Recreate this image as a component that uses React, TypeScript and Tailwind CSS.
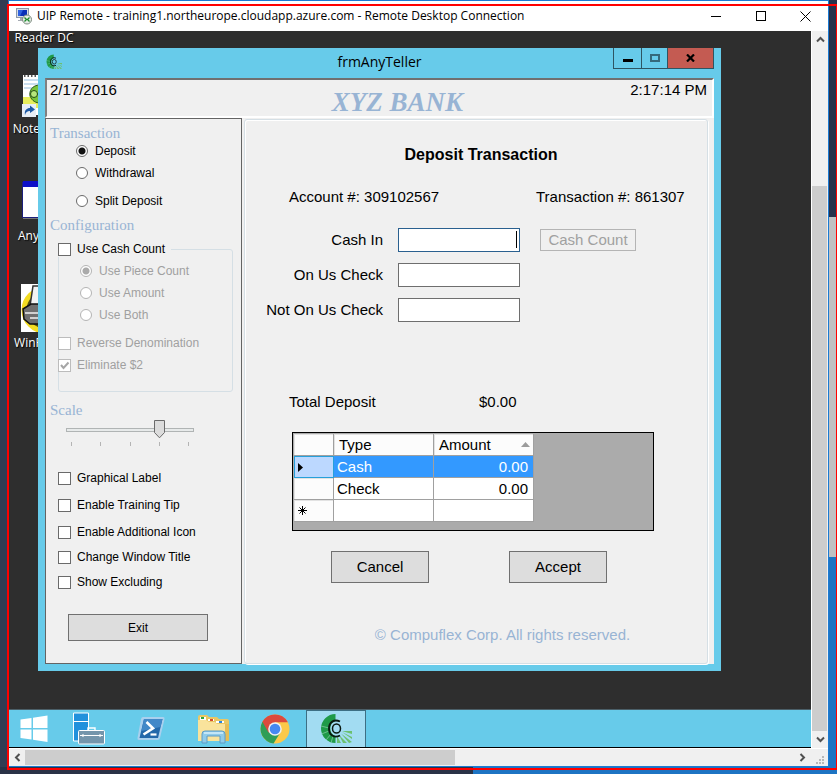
import { useState } from "react";
import type { ReactNode } from "react";

const uiFont = "font-['Open_Sans',sans-serif]";

function BrandMark({ size }: { size: number }) {
  return (
    <svg width={size} height={size} viewBox="0 0 32 32" aria-hidden="true">
      <path d="M15.500 1 A14.500 14.500 0 0 0 15.500 30 L15.500 23 A8 8 0 0 1 15.500 8 Z" fill="#1f9a48" />
      <path d="M1 13 L9 15 M1.500 21 L9 18 M6 27 L11 21 M11 30 L13 23" stroke="#7fc9a0" strokeWidth="0.8" />
      <path d="M17 23 L21 30 L17 30 Z M19 22 L27 30 L23 30 Z M21 20.500 L32 29 L29 30 Z M22 19 L32 24 L32 26 Z M22 18 L32 18 L32 21 Z" fill="#6cc06f" />
      <path d="M20 8.500 C14 5.500 9 9.500 9 15.500 C9 22 14 25.500 20 22.500" fill="none" stroke="#0a1a12" strokeWidth="1.900" />
      <ellipse cx="16.500" cy="15.500" rx="4" ry="4.600" fill="none" stroke="#0a1a12" strokeWidth="1.500" />
    </svg>
  );
}

function RemoteIcon() {
  return (
    <svg width="17" height="17" viewBox="0 0 17 17" aria-hidden="true">
      <rect x="0.500" y="0.500" width="12" height="9" fill="#d7dde6" stroke="#8d98a8" />
      <rect x="2" y="2" width="9" height="6" fill="#0a2fb8" />
      <path d="M2 2 H7 L4 8 H2 Z" fill="#2f62e0" />
      <path d="M4 10 H9 V12 H11 V13 H2 V12 H4 Z" fill="#a5aab2" />
      <circle cx="11" cy="11.500" r="4.500" fill="#e6ece6" stroke="#7d8b80" />
      <path d="M8.500 9.500 L10.500 11.500 L8.500 13.500 M13.500 9.500 L11.500 11.500 L13.500 13.500" fill="none" stroke="#1c8a2c" strokeWidth="1.300" />
    </svg>
  );
}

function NotepadIcon() {
  return (
    <svg width="48" height="48" viewBox="0 0 48 48" aria-hidden="true">
      <rect x="3" y="5" width="42" height="40" fill="#fff" />
      <path d="M4 6 H44" stroke="#555" strokeWidth="2" strokeDasharray="1.500 2" />
      <path d="M4 10 H44 M4 14 H44 M4 18 H44" stroke="#b9d4ea" strokeWidth="1.500" />
      <path d="M3 27 H45 V38 H3 Z" fill="#e7ee5c" />
      <path d="M20 15 C12 15 9 21 10 26 C12 31 16 33 20 33 Z" fill="#78c43a" stroke="#2d5a18" />
      <circle cx="14" cy="24" r="3.500" fill="#b6e67c" stroke="#234c13" />
      <circle cx="22" cy="24" r="4" fill="#b6e67c" stroke="#234c13" />
      <rect x="2" y="34" width="14" height="13" fill="#e7eef6" />
      <path d="M5 45 C4 40 7 38 10 38 V35.500 L15 39.500 L10 43 V41 C7 41 6 42 5 45 Z" fill="#1d5aa6" />
    </svg>
  );
}

function TellerIcon() {
  return (
    <svg width="48" height="48" viewBox="0 0 48 48" aria-hidden="true">
      <rect x="2.500" y="5.500" width="43" height="35" fill="#fff" stroke="#1c1f7c" />
      <rect x="3" y="4" width="42" height="6" fill="#0d10c8" />
      <path d="M3 41.500 H45" stroke="#777" />
    </svg>
  );
}

function PrinterIcon() {
  return (
    <svg width="48" height="48" viewBox="0 0 48 48" aria-hidden="true">
      <rect x="1" y="0" width="46" height="48" fill="#fff" />
      <circle cx="25" cy="26" r="21" fill="#55540f" stroke="#f3dc22" strokeWidth="5" />
      <path d="M13 2 H34 V22 H10 Z" fill="#f3f3f3" stroke="#333" strokeWidth="1.500" />
      <path d="M3 25 L11 20 H36 V40 H10 L4 35 Z" fill="#6f6f6f" stroke="#111" strokeWidth="1.500" />
      <path d="M5 29 H36 M10 34 H36" stroke="#d0d0d0" strokeWidth="2" />
    </svg>
  );
}

function StartLogo() {
  return (
    <svg width="28" height="28" viewBox="0 0 28 28" aria-hidden="true">
      <path d="M0.500 4.500 L11.500 3 V13 H0.500 Z M13 2.800 L27.500 0.500 V13 H13 Z M0.500 14.500 H11.500 V24.500 L0.500 23 Z M13 14.500 H27.500 V27 L13 24.800 Z" fill="#fff" />
    </svg>
  );
}

function ServerManagerIcon() {
  return (
    <svg width="32" height="33" viewBox="0 0 32 33" aria-hidden="true">
      <path d="M0.500 1 H15.500 V29 H0.500 Z" fill="#2191dc" stroke="#fff" />
      <path d="M0 9.500 H16" stroke="#fff" />
      <path d="M15 18 V16 H22 V18" fill="none" stroke="#fff" strokeWidth="1.400" />
      <rect x="5.500" y="18.500" width="26" height="13.500" rx="1" fill="#7495ab" stroke="#fff" />
      <path d="M7 23.500 H30" stroke="#fff" />
      <path d="M8 23.500 L10.500 21.800 V25.200 Z M29 23.500 L26.500 21.800 V25.200 Z" fill="#fff" />
    </svg>
  );
}

function PowerShellIcon() {
  return (
    <svg width="28" height="25" viewBox="0 0 28 25" aria-hidden="true">
      <path d="M6 1 H26 Q28 1 27.500 3 L23 22 Q22.500 24 20.500 24 H2 Q0 24 0.500 22 L4 3 Q4.400 1 6 1 Z" fill="#a9d0ee" />
      <path d="M7 3 H25.500 L21 22 H2.500 Z" fill="#2468aa" />
      <path d="M7 3 H25.500 L23.500 11 L4.500 15 Z" fill="#4288c8" />
      <path d="M9.500 6 L16 12.300 L6.500 18.500" fill="none" stroke="#fff" strokeWidth="2.600" />
      <path d="M13.500 18.500 H19.500" stroke="#fff" strokeWidth="2.200" />
    </svg>
  );
}

function ExplorerIcon() {
  return (
    <svg width="33" height="30" viewBox="0 0 33 30" aria-hidden="true">
      <path d="M1 3 Q1 1 3 1 H10 L12 3 H20 L22 5 H30 Q32 5 32 7 V27 H1 Z" fill="#e9c765" />
      <path d="M3 3 H9 V6 H3 Z" fill="#fff" />
      <path d="M4 3 H7 V5 H4 Z" fill="#2ba53a" />
      <path d="M11 5 H17 V7 H11 Z" fill="#fff" />
      <path d="M13 5 H16 V7 H13 Z" fill="#d74a2c" />
      <path d="M19 7 H27 V9 H19 Z" fill="#fff" />
      <path d="M22 7 H25 V9 H22 Z" fill="#2784dd" />
      <path d="M1 6 H9 L12 8 H18 L20 10 H32 V27 H1 Z" fill="#f9e39c" />
      <path d="M28 10 H32 V27 H28 Z" fill="#e5bd57" />
      <path d="M5 29 V20 Q5 17 8 17 H25 Q28 17 28 20 V29 H23 V22 H10 V29 Z" fill="#8fcbea" stroke="#5d9cc6" />
      <path d="M7 19 H26" stroke="#d4effb" strokeWidth="1.500" />
    </svg>
  );
}

function ChromeIcon() {
  return (
    <svg width="30" height="30" viewBox="0 0 30 30" aria-hidden="true">
      <circle cx="15" cy="15" r="14.500" fill="#fbc94a" />
      <path d="M15 15 L2.440 7.750 A14.500 14.500 0 0 0 13.500 29.400 L21 17.500 Z" fill="#2f9e58" />
      <path d="M15 15 L8.500 18.500 L2.440 7.750 A14.500 14.500 0 0 1 27.560 7.750 L27.800 8.300 H15 Z" fill="#dc4a3d" />
      <circle cx="15" cy="15" r="6.800" fill="#f1f1f1" />
      <circle cx="15" cy="15" r="5.300" fill="#4688f1" />
    </svg>
  );
}

function Chevron({ turn }: { turn: string }) {
  return (
    <svg width="9" height="9" viewBox="0 0 9 9" className={turn} aria-hidden="true">
      <path d="M1 6.500 L4.500 3 L8 6.500" fill="none" stroke="#505050" strokeWidth="2" />
    </svg>
  );
}

type OptionProps = { id: string; label: string; disabled?: boolean; checked?: boolean };

function RadioOption({ id, name, label, disabled, checked }: OptionProps & { name: string }) {
  return (
    <div className="flex h-4 items-center gap-[7px]">
      <input
        id={id}
        name={name}
        type="radio"
        defaultChecked={checked}
        disabled={disabled}
        className="size-3 shrink-0 appearance-none rounded-full border border-[#6a6a6a] bg-white checked:bg-[radial-gradient(circle,#111_3px,#fff_4px)] disabled:border-[#b4b4b4] disabled:checked:bg-[radial-gradient(circle,#aaa_3px,#fff_4px)]"
      />
      <label htmlFor={id} className={disabled ? "text-[#a0a0a0]" : ""}>{label}</label>
    </div>
  );
}

function CheckOption({ id, label, disabled, checked }: OptionProps) {
  return (
    <div className="flex h-4 items-center gap-1.5">
      <span className="relative size-[13px] shrink-0">
        <input
          id={id}
          type="checkbox"
          defaultChecked={checked}
          disabled={disabled}
          className="peer block size-[13px] appearance-none border border-[#6a6a6a] bg-white disabled:border-[#bcbcbc]"
        />
        <svg viewBox="0 0 13 13" className="pointer-events-none absolute inset-0 hidden text-[#222] peer-checked:block peer-disabled:text-[#a6a6a6]" aria-hidden="true">
          <path d="M3 6 L5.500 9 L10.500 3.500" fill="none" stroke="currentColor" strokeWidth="2" />
        </svg>
      </span>
      <label htmlFor={id} className={disabled ? "whitespace-nowrap text-[#a0a0a0]" : "whitespace-nowrap"}>{label}</label>
    </div>
  );
}

function SectionTitle({ children }: { children: ReactNode }) {
  return <h2 className="pl-1 font-['Liberation_Serif',serif] text-[15px] leading-5 text-[#98b4d4]">{children}</h2>;
}

function ScaleSlider() {
  const [value, setValue] = useState(3);
  return (
    <div className="relative ml-5 w-32">
      <input
        type="range"
        aria-label="Scale"
        min={0}
        max={4}
        value={value}
        onChange={(e) => setValue(Number(e.target.value))}
        className="block h-5 w-full appearance-none bg-transparent [&::-webkit-slider-runnable-track]:h-1 [&::-webkit-slider-runnable-track]:border [&::-webkit-slider-runnable-track]:border-[#b0b4b4] [&::-webkit-slider-runnable-track]:bg-[#e7eaea] [&::-webkit-slider-thumb]:size-0 [&::-webkit-slider-thumb]:appearance-none"
      />
      <svg
        width="11"
        height="19"
        viewBox="0 0 11 19"
        className="pointer-events-none absolute top-0"
        style={{ left: `calc((100% - 11px) * ${value / 4})` }}
        aria-hidden="true"
      >
        <path d="M0.500 0.500 H10.500 V12.500 L5.500 17.800 L0.500 12.500 Z" fill="#dcdcdc" stroke="#6a6a6a" />
      </svg>
      <div className="flex justify-between px-[5px] pt-0.5">
        {[0, 1, 2, 3, 4].map((tick) => (
          <span key={tick} className="h-1 w-px bg-[#b4b4b4]" />
        ))}
      </div>
    </div>
  );
}

function OptionsPanel() {
  return (
    <aside className="flex w-[197px] shrink-0 flex-col border border-[#646464] pt-1 text-xs leading-4">
      <SectionTitle>Transaction</SectionTitle>
      <div className="flex flex-col pl-[30px]">
        <RadioOption id="deposit" name="kind" label="Deposit" checked />
        <div className="pt-1.5">
          <RadioOption id="withdrawal" name="kind" label="Withdrawal" />
        </div>
        <div className="pt-3 pb-1.5">
          <RadioOption id="split" name="kind" label="Split Deposit" />
        </div>
      </div>
      <SectionTitle>Configuration</SectionTitle>
      <fieldset className="mt-1.5 mr-2 ml-3 rounded-[3px] border border-[#d5dfe5] pb-[18px]">
        <legend className="-ml-px pr-1.5">
          <CheckOption id="cash-count" label="Use Cash Count" />
        </legend>
        <div className="flex flex-col gap-1.5 pt-1.5 pl-[21px]">
          <RadioOption id="piece" name="method" label="Use Piece Count" disabled checked />
          <RadioOption id="amount" name="method" label="Use Amount" disabled />
          <RadioOption id="both" name="method" label="Use Both" disabled />
        </div>
        <div className="-ml-px flex flex-col gap-1.5 pt-3">
          <CheckOption id="reverse" label="Reverse Denomination" disabled />
          <CheckOption id="eliminate" label="Eliminate $2" disabled checked />
        </div>
      </fieldset>
      <div className="pt-2">
        <SectionTitle>Scale</SectionTitle>
      </div>
      <ScaleSlider />
      <div className="flex flex-col gap-[9px] pt-6 pl-3">
        <CheckOption id="graphical" label="Graphical Label" />
        <div className="py-0.5">
          <CheckOption id="tip" label="Enable Training Tip" />
        </div>
        <CheckOption id="icon" label="Enable Additional Icon" />
        <CheckOption id="title" label="Change Window Title" />
        <CheckOption id="excluding" label="Show Excluding" />
      </div>
      <button type="button" className="mt-6 ml-[22px] h-[27px] w-[140px] border border-[#707070] bg-[#dddddd]">Exit</button>
    </aside>
  );
}

function AmountRow({ id, label, focused, children }: { id: string; label: string; focused?: boolean; children?: ReactNode }) {
  return (
    <div className="flex items-center">
      <label htmlFor={id} className="w-[138px] text-right whitespace-nowrap">{label}</label>
      <span className="relative mr-5 ml-[15px]">
        <input
          id={id}
          type="text"
          className={
            focused
              ? "block h-6 w-[122px] border border-[#2a608f] bg-white px-1 text-right caret-transparent outline-none"
              : "block h-6 w-[122px] border border-[#6e6e6e] bg-white px-1 text-right outline-none"
          }
        />
        {focused && <span className="absolute top-[3px] right-[3px] h-[17px] w-px bg-black" />}
      </span>
      {children}
    </div>
  );
}

function DepositGrid() {
  const headCell = "border-r border-b border-[#a0a0a0] bg-[#fcfcfc] shadow-[inset_1px_1px_0_#e2e2e2]";
  return (
    <div className="ml-[47px] h-[99px] w-[362px] border border-black bg-[#ababab] p-px">
      <table className="w-[240px] table-fixed border-separate border-spacing-0 text-[15px] leading-5">
        <colgroup>
          <col className="w-10" />
          <col className="w-[100px]" />
          <col className="w-[100px]" />
        </colgroup>
        <thead>
          <tr className="h-[22px]">
            <th className={headCell} aria-label="Row" />
            <th className={`${headCell} pl-[5px] text-left font-normal`}>Type</th>
            <th className={`${headCell} pl-[5px] text-left font-normal`}>
              <span className="flex items-center justify-between pr-[3px]">
                Amount
                <svg width="9" height="5" viewBox="0 0 9 5" aria-hidden="true">
                  <path d="M0 5 L4.500 0 L9 5 Z" fill="#9c9c9c" />
                </svg>
              </span>
            </th>
          </tr>
        </thead>
        <tbody>
          <tr className="h-[22px] text-white">
            <th className="border border-[#26a0da] bg-[#bcd8ff] pl-[3px]" aria-label="Current row">
              <svg width="5" height="9" viewBox="0 0 5 9" aria-hidden="true">
                <path d="M0 0 L5 4.500 L0 9 Z" fill="#000" />
              </svg>
            </th>
            <td className="border-r border-b border-[#a0a0a0] bg-[#3399ff] pl-[3px]">Cash</td>
            <td className="border-r border-b border-[#a0a0a0] bg-[#3399ff] pr-[5px] text-right">0.00</td>
          </tr>
          <tr className="h-[22px]">
            <th className={headCell} aria-label="Row" />
            <td className="border-r border-b border-[#a0a0a0] bg-white pl-[3px]">Check</td>
            <td className="border-r border-b border-[#a0a0a0] bg-white pr-[5px] text-right">0.00</td>
          </tr>
          <tr className="h-[22px]">
            <th className={`${headCell} pl-1`} aria-label="New row">
              <svg width="9" height="9" viewBox="0 0 9 9" aria-hidden="true">
                <path d="M4.500 0 V9 M0 4.500 H9 M1.500 1.500 L7.500 7.500 M7.500 1.500 L1.500 7.500" stroke="#000" />
              </svg>
            </th>
            <td className="border-r border-b border-[#a0a0a0] bg-white" />
            <td className="border-r border-b border-[#a0a0a0] bg-white" />
          </tr>
        </tbody>
      </table>
    </div>
  );
}

function DepositPanel() {
  return (
    <section className="mt-px mr-1.5 ml-0.5 flex flex-1 flex-col rounded-[3px] border border-[#d5dfe5] shadow-[inset_1px_1px_0_#fff,1px_1px_0_#fff]">
      <h1 className="pt-[25px] pl-2.5 text-center text-base leading-5 font-bold">Deposit Transaction</h1>
      <div className="flex pt-[22px] pl-11">
        <p className="w-[247px]">Account #: 309102567</p>
        <p>Transaction #: 861307</p>
      </div>
      <form className="flex flex-col gap-[11px] pt-[21px]" onSubmit={(e) => e.preventDefault()}>
        <AmountRow id="cash-in" label="Cash In" focused>
          <button type="button" disabled className="h-[22px] w-24 border border-[#b4b4b4] bg-[#f0f0f0] text-[#a0a0a0]">Cash Count</button>
        </AmountRow>
        <AmountRow id="on-us" label="On Us Check" />
        <AmountRow id="not-on-us" label="Not On Us Check" />
      </form>
      <div className="flex pt-[70px] pb-5 pl-11">
        <p className="w-[190px]">Total Deposit</p>
        <p>$0.00</p>
      </div>
      <DepositGrid />
      <div className="flex gap-20 pt-5 pl-[86px]">
        <button type="button" className="h-8 w-[98px] border border-[#707070] bg-[#dddddd]">Cancel</button>
        <button type="button" className="h-8 w-[98px] border border-[#707070] bg-[#dddddd]">Accept</button>
      </div>
      <p className="pt-[42px] pl-[53px] text-center text-[#98b4d4]">© Compuflex Corp. All rights reserved.</p>
    </section>
  );
}

function TellerWindow() {
  return (
    <div className="absolute top-[17px] left-[29px] flex w-[683px] flex-col bg-[#67cbea] px-[7px] pb-[7px] font-['Liberation_Sans',Arial,sans-serif] text-[15px] leading-5 text-black">
      <header className="grid h-[30px] grid-cols-[101px_1fr_101px] items-start">
        <span className="pt-1.5 pl-px">
          <BrandMark size={16} />
        </span>
        <span className="pt-1 text-center font-['Open_Sans',sans-serif] text-sm leading-5">frmAnyTeller</span>
        <span className="flex h-[21px] divide-x divide-[#2e5563] border border-t-0 border-[#2e5563]">
          <button type="button" aria-label="Minimize" className="flex w-7 items-center justify-center">
            <span className="mt-1 h-[3px] w-2.5 bg-black" />
          </button>
          <button type="button" aria-label="Maximize" className="flex w-[26px] items-center justify-center">
            <span className="h-2 w-2.5 border-2 border-[#35697b]" />
          </button>
          <button type="button" aria-label="Close" className="flex flex-1 items-center justify-center bg-[#c45b52]">
            <svg width="9" height="8" viewBox="0 0 9 8" aria-hidden="true">
              <path d="M1 0.500 L8 7.500 M8 0.500 L1 7.500" stroke="#000" strokeWidth="2.200" />
            </svg>
          </button>
        </span>
      </header>
      <div className="flex h-10 justify-between border-2 border-t-[#707070] border-r-white border-b-white border-l-[#808080] bg-[#f0f0f0] pr-[5px] pl-[3px]">
        <span>2/17/2016</span>
        <span className="pt-2 pl-12 font-['Liberation_Serif',serif] text-[27px] leading-7 font-bold text-[#98b4d4] italic">XYZ BANK</span>
        <span>2:17:14 PM</span>
      </div>
      <main className="flex h-[546px] bg-[#f0f0f0]">
        <OptionsPanel />
        <DepositPanel />
      </main>
    </div>
  );
}

function DesktopIcon({ label, children }: { label: string; children: ReactNode }) {
  return (
    <div className="flex flex-col items-center gap-[3px]">
      {children}
      <span className="text-xs leading-4">{label}</span>
    </div>
  );
}

function TaskButton({ label, active, children }: { label: string; active?: boolean; children: ReactNode }) {
  return (
    <button
      type="button"
      aria-label={label}
      className={
        active
          ? "flex w-[60px] items-center justify-center border-x border-t border-[#3d6f84] bg-[#a2dcf2]"
          : "flex w-[62px] items-center justify-center"
      }
    >
      {children}
    </button>
  );
}

export default function App() {
  return (
    <div className="relative flex min-h-screen flex-col overflow-hidden bg-[#2e3950]">
      <div className="flex flex-1">
        <div className="w-2 shrink-0 bg-[#323c53]" />
        <div className={`flex min-w-0 flex-1 flex-col border border-[#1b7ad2] ${uiFont}`}>
          <header className="flex h-[30px] shrink-0 items-center bg-white pl-[7px] text-black">
            <RemoteIcon />
            <h1 className="flex-1 pl-1 text-xs leading-4 whitespace-nowrap">
              UIP Remote - training1.northeurope.cloudapp.azure.com - Remote Desktop Connection
            </h1>
            <button type="button" aria-label="Minimize window" className="flex h-full w-[45px] items-center justify-center">
              <span className="h-px w-2.5 bg-black" />
            </button>
            <button type="button" aria-label="Maximize window" className="flex h-full w-[45px] items-center justify-center">
              <span className="size-2.5 border border-black" />
            </button>
            <button type="button" aria-label="Close window" className="flex h-full w-[45px] items-center justify-center">
              <svg width="11" height="11" viewBox="0 0 11 11" aria-hidden="true">
                <path d="M0.500 0.500 L10.500 10.500 M10.500 0.500 L0.500 10.500" stroke="#000" />
              </svg>
            </button>
          </header>
          <div className="flex flex-1">
            <div className="flex min-w-0 flex-1 flex-col">
              <div className="relative min-h-[640px] flex-1 overflow-hidden bg-[#2e2e2e] pt-px">
                <div className="flex w-[70px] flex-col text-white [text-shadow:1px_1px_1px_#000]">
                  <span className="pb-[26px] text-center text-xs leading-3 whitespace-nowrap">Reader DC</span>
                  <div className="flex flex-col gap-10">
                    <DesktopIcon label="Notepad++"><NotepadIcon /></DesktopIcon>
                    <DesktopIcon label="AnyTeller"><TellerIcon /></DesktopIcon>
                    <DesktopIcon label="WinPrinter"><PrinterIcon /></DesktopIcon>
                  </div>
                </div>
                <TellerWindow />
              </div>
              <nav className="flex h-[39px] border-t border-b border-t-[#4b5f68] border-b-black bg-[#67cbea]" aria-label="Taskbar">
                <button type="button" aria-label="Start" className="flex w-[49px] items-center justify-center">
                  <StartLogo />
                </button>
                <TaskButton label="Server Manager"><ServerManagerIcon /></TaskButton>
                <TaskButton label="PowerShell"><PowerShellIcon /></TaskButton>
                <TaskButton label="File Explorer"><ExplorerIcon /></TaskButton>
                <TaskButton label="Chrome"><ChromeIcon /></TaskButton>
                <TaskButton label="AnyTeller" active><BrandMark size={32} /></TaskButton>
              </nav>
            </div>
            <div className="flex w-[17px] shrink-0 flex-col border-l border-white bg-[#f0f0f0]">
              <button type="button" aria-label="Scroll up" className="flex h-[17px] items-center justify-center">
                <Chevron turn="rotate-0" />
              </button>
              <div className="mt-[138px] mr-px flex-1 bg-[#cdcdcd]" />
              <button type="button" aria-label="Scroll down" className="flex h-[17px] items-center justify-center">
                <Chevron turn="rotate-180" />
              </button>
            </div>
          </div>
          <div className="flex h-[18px] border-t border-white bg-[#f0f0f0]">
            <button type="button" aria-label="Scroll left" className="flex w-4 items-center justify-center">
              <Chevron turn="-rotate-90" />
            </button>
            <div className="my-px w-[430px] bg-[#cdcdcd]" />
            <div className="flex-1" />
            <button type="button" aria-label="Scroll right" className="flex w-[17px] items-center justify-center">
              <Chevron turn="rotate-90" />
            </button>
            <span className="flex w-[17px] items-end justify-center pb-0.5">
              <svg width="8" height="8" viewBox="0 0 8 8" aria-hidden="true">
                <path d="M6 0 H8 V2 H6 Z M3 3 H5 V5 H3 Z M6 3 H8 V5 H6 Z M0 6 H2 V8 H0 Z M3 6 H5 V8 H3 Z M6 6 H8 V8 H6 Z" fill="#b8b8b8" />
              </svg>
            </span>
          </div>
        </div>
        <div className="flex w-2 shrink-0 flex-col">
          <div className="h-[217px] bg-[#27324c]" />
          <div className="h-[340px] bg-[#bfc1c3]" />
          <div className="flex-1 bg-[#1d74c3]" />
        </div>
      </div>
      <div className="flex h-[7px] shrink-0">
        <div className="w-[473px] bg-[#2a3247]" />
        <div className="flex-1 bg-[#1d74c3]" />
      </div>
      <div className="pointer-events-none absolute top-1 right-0 bottom-1 left-[7px] border-2 border-r border-[#ff0000]" />
    </div>
  );
}
